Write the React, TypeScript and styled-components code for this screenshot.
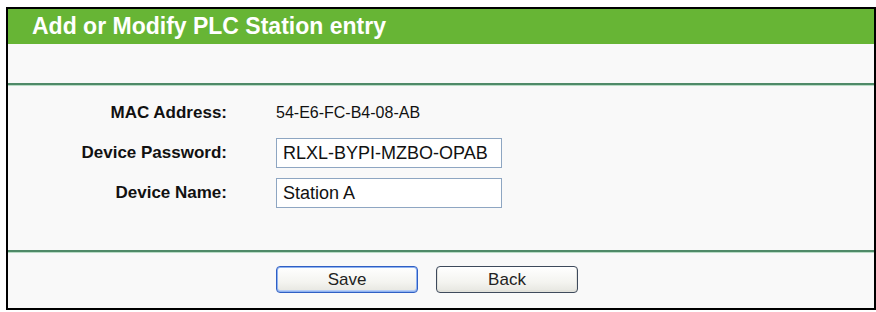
import React from "react";
import styled, { createGlobalStyle } from "styled-components";

const Global = createGlobalStyle`
  html, body { margin: 0; padding: 0; background: #ffffff; }
  body { font-family: "Liberation Sans", Arial, sans-serif; }
`;

const Page = styled.div`
  padding: 7px 1px 0 6px;
`;

const Panel = styled.div`
  width: 866px;
  height: 299px;
  border: 2px solid #000;
  background: #f9f9f9;
  display: flex;
  flex-direction: column;
`;

const Header = styled.div`
  height: 35px;
  background: #67b535;
  color: #fff;
  font-weight: bold;
  font-size: 23px;
  display: flex;
  align-items: center;
  padding-left: 24px;
`;

const Spacer = styled.div`
  height: 39px;
`;

const Divider = styled.div`
  height: 2px;
  background: #4f8a68;
  border-bottom: 1px solid #b9dcc6;
`;

const Form = styled.div`
  display: grid;
  grid-template-columns: 219px 1fr;
  column-gap: 49px;
  row-gap: 10px;
  padding: 12px 0 42px 0;
  align-items: center;
`;

const Label = styled.div`
  text-align: right;
  font-weight: bold;
  font-size: 17px;
  color: #111;
  height: 30px;
  line-height: 30px;
`;

const Value = styled.div`
  font-size: 16px;
  color: #111;
  height: 30px;
  line-height: 30px;
`;

const Input = styled.input`
  box-sizing: border-box;
  width: 226px;
  height: 30px;
  border: 1px solid #8ea6c2;
  background: #fff;
  font-family: "Liberation Sans", Arial, sans-serif;
  font-size: 18px;
  color: #111;
  padding: 0 0 0 6px;
  margin: 0;
  outline: none;
`;

const Buttons = styled.div`
  display: flex;
  gap: 18px;
  padding: 13px 0 0 268px;
`;

const Button = styled.button<{ $primary?: boolean }>`
  box-sizing: border-box;
  width: 142px;
  height: 27px;
  border-radius: 4px;
  border: 1px solid ${(p) => (p.$primary ? "#2f5fc4" : "#3e4a5c")};
  background: linear-gradient(#ffffff, #f4f4f0 60%, #e6e6e0);
  box-shadow: ${(p) =>
    p.$primary
      ? "inset 0 0 0 1px #8fb2f0, inset 0 -1px 0 1px #b6ccf4"
      : "inset 0 -1px 0 1px #e2e2dc"};
  font-family: "Liberation Sans", Arial, sans-serif;
  font-size: 17px;
  color: #222;
  padding: 0;
  cursor: pointer;
`;

export default function App() {
  return (
    <Page>
      <Global />
      <Panel>
        <Header>Add or Modify PLC Station entry</Header>
        <Spacer />
        <Divider />
        <Form>
          <Label>MAC Address:</Label>
          <Value>54-E6-FC-B4-08-AB</Value>
          <Label>Device Password:</Label>
          <div>
            <Input defaultValue="RLXL-BYPI-MZBO-OPAB" />
          </div>
          <Label>Device Name:</Label>
          <div>
            <Input defaultValue="Station A" />
          </div>
        </Form>
        <Divider />
        <Buttons>
          <Button $primary>Save</Button>
          <Button>Back</Button>
        </Buttons>
      </Panel>
    </Page>
  );
}
